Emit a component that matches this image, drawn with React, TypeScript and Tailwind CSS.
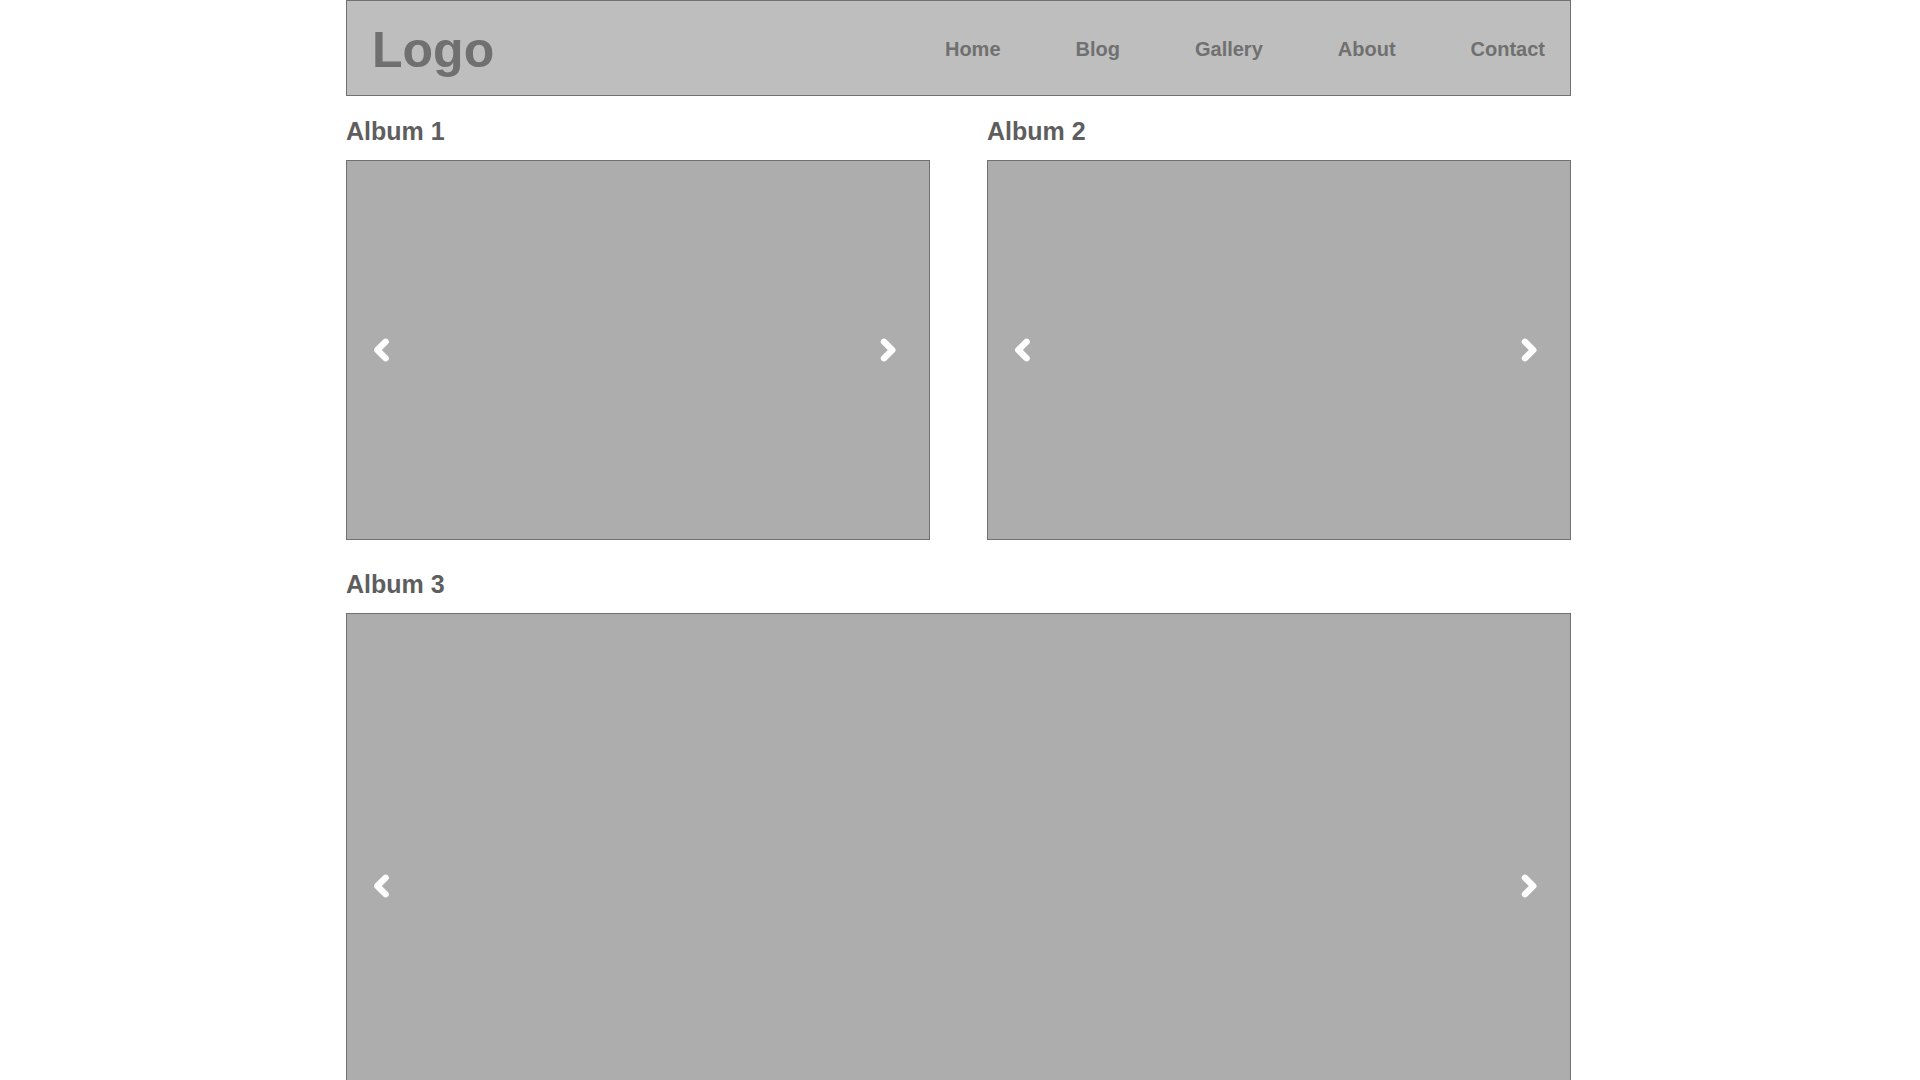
type ArrowProps = { direction: "left" | "right"; label: string };

function ArrowButton({ direction, label }: ArrowProps) {
  return (
    <button type="button" aria-label={label} className="flex cursor-pointer text-white">
      <svg width="16" height="24" viewBox="0 0 16 24" fill="none" stroke="currentColor" strokeWidth="6.4" strokeLinecap="round" strokeLinejoin="round">
        <path d={direction === "left" ? "M11.6 3.8L3.3 12L11.6 20.2" : "M4 3.8L12.3 12L4 20.2"} />
      </svg>
    </button>
  );
}

function Album({ title, tall = false }: { title: string; tall?: boolean }) {
  return (
    <section className={tall ? "md:col-span-2" : ""}>
      <h2 className="mb-[9px] text-[25px] leading-10 font-bold text-[#5e5e5e]">{title}</h2>
      <div
        className={`flex items-center justify-between border border-[#707070] bg-[#adadad] pr-[33px] pl-[27px] ${
          tall ? "h-[546px]" : "h-[380px]"
        }`}
      >
        <ArrowButton direction="left" label={`Previous picture in ${title}`} />
        <ArrowButton direction="right" label={`Next picture in ${title}`} />
      </div>
    </section>
  );
}

const links = ["Home", "Blog", "Gallery", "About", "Contact"];

export default function App() {
  return (
    <div className="bg-white pr-[3px] font-['Liberation_Sans',Arial,sans-serif]">
      <div className="mx-auto max-w-[1225px]">
        <header className="flex min-h-24 flex-wrap items-center justify-between border border-[#707070] bg-[#bebebe] px-[25px] pt-0.5 font-bold text-[#707070]">
          <a href="#home" className="pt-0.5 text-[50px] leading-[60px]">
            Logo
          </a>
          <nav className="flex flex-wrap gap-x-[75px] text-xl">
            {links.map((link) => (
              <a key={link} href={`#${link.toLowerCase()}`}>
                {link}
              </a>
            ))}
          </nav>
        </header>
        <main className="mt-[15px] grid gap-x-[57px] gap-y-6 md:grid-cols-2">
          <Album title="Album 1" />
          <Album title="Album 2" />
          <Album title="Album 3" tall />
        </main>
      </div>
    </div>
  );
}
